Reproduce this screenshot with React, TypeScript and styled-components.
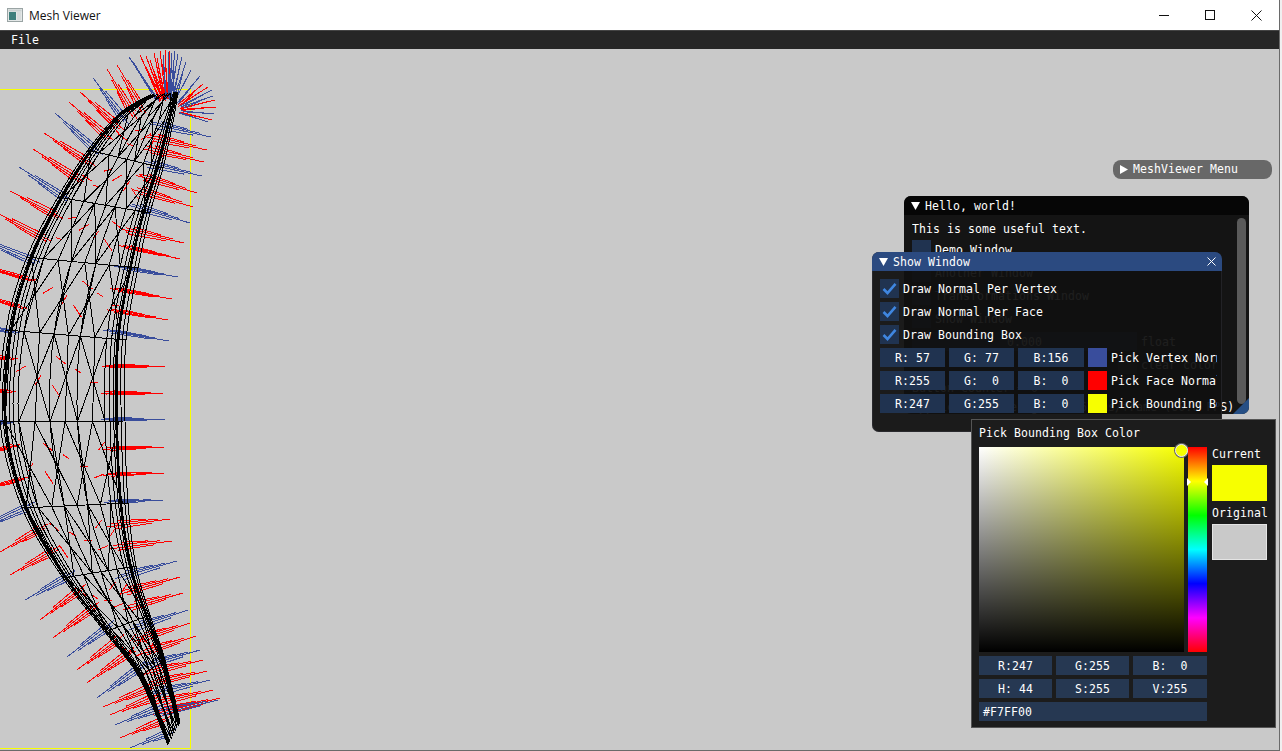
import styled, { createGlobalStyle } from 'styled-components';

type Pt = [number, number];

const GlobalStyle = createGlobalStyle`
  html, body {
    margin: 0;
    height: 100%;
    background: #f0f0f0;
    overflow: hidden;
  }
  #root {
    height: 100%;
  }
`;

const MONO = `'DejaVu Sans Mono', 'Liberation Mono', monospace`;

const Page = styled.div`
  position: relative;
  width: 1279px;
  height: 750px;
  display: flex;
  flex-direction: column;
  border-right: 1px solid #6a6a6a;
  border-bottom: 1px solid #6a6a6a;
`;

const TitleBar = styled.div`
  height: 30px;
  flex: none;
  display: flex;
  align-items: center;
  background: #fff;
  padding-left: 7px;
  font-family: 'Open Sans', 'Noto Sans', sans-serif;
  font-size: 12px;
  color: #111;
`;

const AppName = styled.span`
  margin-left: 6px;
  flex: 1;
`;

const CaptionButton = styled.div`
  width: 46px;
  height: 30px;
  display: flex;
  align-items: center;
  justify-content: center;
`;

const MenuBar = styled.div`
  height: 18px;
  flex: none;
  display: flex;
  align-items: center;
  padding-left: 11px;
  background: #262626;
  border-top: 1px solid #444;
  font-family: ${MONO};
  font-size: 11.5px;
  letter-spacing: 0.08px;
  color: #fff;
`;

const Viewport = styled.div`
  position: relative;
  flex: 1;
  background: #c9c9c9;
  overflow: hidden;
`;

const MeshCanvas = styled.svg`
  position: absolute;
  left: 0;
  top: 0;
`;

const SideMark = styled.div`
  position: absolute;
  left: 1280px;
  top: 670px;
  width: 2px;
  height: 27px;
  background: #2b4a80;
`;

/* imgui windows: free floating, canvas coordinates relative to the viewport (y - 49) */
const ImWindow = styled.div`
  position: absolute;
  font-family: ${MONO};
  font-size: 11.5px;
  letter-spacing: 0.08px;
  line-height: 21px;
  color: #fff;
  white-space: pre;
`;

const MenuCollapsed = styled(ImWindow)`
  left: 1113px;
  top: 111px;
  width: 159px;
  height: 19px;
  border-radius: 8px;
  background: #686868;
  display: flex;
  align-items: center;
  padding-left: 6px;
  box-sizing: border-box;
  gap: 4px;
`;

const HelloWindow = styled(ImWindow)`
  left: 904px;
  top: 147px;
  width: 345px;
  height: 218px;
  border-radius: 7px;
  background: #141414;
  overflow: hidden;
`;

const ShowWindow = styled(ImWindow)`
  left: 872px;
  top: 203px;
  width: 350px;
  height: 180px;
  border-radius: 7px;
  background: rgba(16, 16, 16, 0.94);
  box-shadow: 0 0 0 1px rgba(70, 70, 80, 0.35) inset;
  overflow: hidden;
`;

const WindowTitle = styled.div<{ $active?: boolean }>`
  height: 19px;
  display: flex;
  align-items: center;
  gap: 4px;
  padding: 0 6px;
  background: ${({ $active }) => ($active ? '#2b4a80' : '#060606')};
`;

const TitleText = styled.span`
  flex: 1;
  padding-top: 2px;
`;

const RowLabel = styled.span`
  padding-top: 2px;
`;

const HelloBody = styled.div`
  padding: 8px 8px 0;
  display: flex;
  flex-direction: column;
  gap: 4px;
`;

const HelloText = styled.div`
  height: 13px;
  line-height: 13px;
  width: 322px;
  overflow: hidden;
`;

const HelloRow = styled.div<{ $indent?: number }>`
  height: 19px;
  display: flex;
  align-items: center;
  gap: 4px;
  padding-left: ${({ $indent }) => $indent ?? 0}px;
  width: 322px;
  box-sizing: border-box;
  overflow: hidden;
`;

const Scrollbar = styled.div`
  position: absolute;
  right: 3px;
  top: 22px;
  width: 9px;
  height: 186px;
  border-radius: 5px;
  background: #5a5a5a;
`;

const ResizeGrip = styled.div`
  position: absolute;
  right: 0;
  bottom: 0;
  width: 0;
  height: 0;
  border-left: 16px solid transparent;
  border-bottom: 16px solid #264f85;
`;

const ShowBody = styled.div`
  padding: 8px 8px 0;
  display: flex;
  flex-direction: column;
  gap: 4px;
`;

const CheckRow = styled.div`
  height: 19px;
  display: flex;
  align-items: center;
  gap: 4px;
`;

const CheckBox = styled.div`
  width: 19px;
  height: 19px;
  flex: none;
  background: #203350;
  display: flex;
  align-items: center;
  justify-content: center;
`;

const ColorRow = styled.div`
  height: 19px;
  width: 337px;
  display: flex;
  align-items: center;
  gap: 4px;
  overflow: hidden;
`;

const NumberField = styled.div<{ $width: number }>`
  width: ${({ $width }) => $width}px;
  height: 19px;
  flex: none;
  background: #203350;
  text-align: center;
`;

const Swatch = styled.div<{ $color: string }>`
  width: 19px;
  height: 19px;
  flex: none;
  background: ${({ $color }) => $color};
`;

const PickerPopup = styled(ImWindow)`
  left: 971px;
  top: 370px;
  width: 305px;
  height: 309px;
  box-sizing: border-box;
  padding: 4px 7px 0;
  background: #1c1c1c;
  border: 1px solid #555;
  display: flex;
  flex-direction: column;
  gap: 4px;
`;

const PickerHeading = styled.div`
  height: 19px;
  line-height: 19px;
`;

const PickerMain = styled.div`
  display: flex;
  gap: 4px;
`;

const SvSquare = styled.div`
  position: relative;
  width: 205px;
  height: 205px;
  background: linear-gradient(to top, #000, rgba(0, 0, 0, 0)), linear-gradient(to right, #fff, #f7ff00);
`;

const SvMarker = styled.div`
  position: absolute;
  left: 196px;
  top: -3px;
  width: 11px;
  height: 11px;
  border-radius: 50%;
  background: #f7ff00;
  border: 1px solid #eee;
  box-shadow: 0 0 0 1px #666;
`;

const HueBar = styled.div`
  position: relative;
  width: 19px;
  height: 205px;
  background: linear-gradient(to bottom, #f00, #ff0 16.67%, #0f0 33.33%, #0ff 50%, #00f 66.67%, #f0f 83.33%, #f00);
`;

const HueArrow = styled.div<{ $side: 'left' | 'right' }>`
  position: absolute;
  top: 31px;
  ${({ $side }) => $side}: -1px;
  width: 0;
  height: 0;
  border-top: 4px solid transparent;
  border-bottom: 4px solid transparent;
  ${({ $side }) => ($side === 'left' ? 'border-left' : 'border-right')}: 4px solid #fff;
`;

const PreviewColumn = styled.div`
  margin-left: 1px;
  display: flex;
  flex-direction: column;
`;

const PreviewLabel = styled.div`
  height: 18px;
  line-height: 15px;
`;

const PreviewSwatch = styled.div<{ $color: string; $framed?: boolean }>`
  width: 55px;
  height: 36px;
  margin-bottom: 5px;
  box-sizing: border-box;
  background: ${({ $color }) => $color};
  border: ${({ $framed }) => ($framed ? '1px solid #e4e4e4' : 'none')};
`;

const FieldRow = styled.div`
  display: flex;
  gap: 4px;
  width: 228px;
`;

const HexField = styled.div`
  width: 228px;
  height: 19px;
  box-sizing: border-box;
  padding-left: 4px;
  background: #263852;
`;

const PickerField = styled(NumberField)`
  background: #263852;
`;

const TriangleDown = () => (
  <svg width="11" height="10" viewBox="0 0 11 10">
    <path d="M1 1 H10 L5.5 9 Z" fill="#fff" />
  </svg>
);

const TriangleRight = () => (
  <svg width="10" height="11" viewBox="0 0 10 11">
    <path d="M1 1 L9 5.5 L1 10 Z" fill="#fff" />
  </svg>
);

const CheckMark = () => (
  <svg width="15" height="13" viewBox="0 0 15 13">
    <path d="M1.5 7 L5.5 11 L13.5 1.8" fill="none" stroke="#3f86e0" strokeWidth="2.6" />
  </svg>
);

const CloseMark = () => (
  <svg width="9" height="9" viewBox="0 0 9 9">
    <path d="M0.5 0.5 L8.5 8.5 M8.5 0.5 L0.5 8.5" stroke="#fff" strokeWidth="1" />
  </svg>
);

const AppIcon = () => (
  <svg width="16" height="14" viewBox="0 0 16 14">
    <rect x="0.5" y="0.5" width="15" height="13" fill="#e4e8e8" stroke="#9aa4a4" />
    <rect x="1.5" y="1.5" width="13" height="2" fill="#c8d0d0" />
    <rect x="2" y="4" width="7" height="8" fill="#3e7f7c" />
    <rect x="10" y="4" width="4" height="8" fill="#d7dcdc" />
  </svg>
);

/* mesh data, coordinates are page pixels, shifted up by OFFSET_Y when drawn */
const OFFSET_Y = 49;
const ribs: [Pt, Pt][] = [
  [[150, 95], [178, 92]],
  [[120, 113], [173, 122]],
  [[88, 150], [163, 168]],
  [[58, 197], [150, 213]],
  [[27, 257], [138, 268]],
  [[6, 330], [126, 340]],
  [[0, 422], [125, 421]],
  [[22, 508], [128, 503]],
  [[63, 578], [136, 566]],
  [[105, 632], [150, 615]],
  [[139, 677], [165, 660]],
  [[168, 745], [180, 722]],
];
const fractions = [0, 0.025, 0.05, 0.08, 0.11, 0.15, 0.4, 0.62, 0.84, 0.88, 0.91, 0.94, 0.97, 1];
// the two strands that read as heavy outlines in the wireframe
const heavyFractions = [0.04, 0.93];
// cells of the fraction table that get crossed diagonals
const crossed: [number, number][] = [
  [0.04, 0.28],
  [0.15, 0.4],
  [0.28, 0.52],
  [0.4, 0.62],
  [0.52, 0.74],
  [0.62, 0.84],
  [0.74, 0.95],
];

const rightTips: [number, number, number][] = [
  [211, 137, 1], [207, 150, 0], [204, 162, 0], [202, 176, 1], [197, 193, 0], [193, 207, 0], [190, 223, 1], [184, 243, 0],
  [180, 259, 0], [178, 277, 1], [172, 299, 0], [168, 320, 0], [169, 341, 1], [165, 367, 0], [163, 394, 0], [165, 420, 1],
  [164, 447, 0], [164, 473, 0], [163, 500, 1], [170, 519, 0], [172, 541, 0], [177, 561, 1], [180, 577, 0], [183, 593, 0],
  [188, 610, 1], [190, 623, 0], [196, 636, 0], [200, 650, 1], [203, 660, 0], [207, 671, 0], [210, 680, 1], [213, 690, 0],
  [218, 700, 1], [220, 698, 0],
];

const leftTips: [number, number, number][] = [
  [93, 78, 1], [107, 69, 0], [117, 65, 0], [80, 92, 0], [69, 102, 0], [55, 113, 1], [44, 133, 0],
  [33, 149, 0], [19, 167, 1], [10, 191, 0], [-5, 212, 0], [-20, 238, 1], [-30, 262, 0], [-30, 292, 0], [-35, 322, 1],
  [-35, 355, 0], [-35, 388, 0], [-35, 421, 1], [-35, 458, 0], [-30, 492, 0], [-25, 530, 1], [0, 552, 0], [10, 575, 0],
  [25, 600, 1], [40, 620, 0], [53, 638, 0], [67, 657, 1], [77, 670, 0], [87, 683, 0], [97, 698, 1], [103, 707, 0],
  [110, 715, 0], [115, 725, 1], [120, 738, 0], [130, 748, 1],
];

const fanTips: [number, number, number][] = [
  [129, 57, 1], [133, 62, 1], [140, 55, 0], [143, 62, 0], [146, 56, 0], [150, 60, 0], [154, 53, 0], [157, 58, 0],
  [160, 51, 0], [163, 55, 1], [165, 50, 0], [168, 52, 1], [170, 51, 0], [172, 53, 1], [175, 51, 1], [178, 54, 1],
  [182, 57, 1], [186, 62, 1], [191, 70, 1], [200, 76, 1], [203, 84, 0], [208, 87, 0], [212, 90, 1], [213, 96, 1],
  [215, 100, 0], [216, 107, 0], [214, 114, 1], [212, 120, 0], [208, 122, 1],
];

const toStr = (p: Pt) => `${p[0].toFixed(1)},${(p[1] - OFFSET_Y).toFixed(1)}`;
const mix = (a: Pt, b: Pt, t: number): Pt => [a[0] + (b[0] - a[0]) * t, a[1] + (b[1] - a[1]) * t];

// catmull-rom through the rib points, so the long strands stay smooth
function spline(p0: Pt, p1: Pt, p2: Pt, p3: Pt, t: number): Pt {
  const f = (a: number, b: number, c: number, d: number) =>
    0.5 * (2 * b + (c - a) * t + (2 * a - 5 * b + 4 * c - d) * t * t + (3 * b - a - 3 * c + d) * t * t * t);
  return [f(p0[0], p1[0], p2[0], p3[0]), f(p0[1], p1[1], p2[1], p3[1])];
}

function nearest(poly: Pt[], p: Pt): Pt {
  let best: Pt = poly[0];
  let bestD = Infinity;
  for (let i = 0; i < poly.length - 1; i++) {
    const [a, b] = [poly[i], poly[i + 1]];
    const dx = b[0] - a[0];
    const dy = b[1] - a[1];
    const t = Math.max(0, Math.min(1, ((p[0] - a[0]) * dx + (p[1] - a[1]) * dy) / (dx * dx + dy * dy)));
    const q = mix(a, b, t);
    const d = (q[0] - p[0]) ** 2 + (q[1] - p[1]) ** 2;
    if (d < bestD) {
      bestD = d;
      best = q;
    }
  }
  return best;
}

function buildBundle(tips: [number, number, number][], contour: Pt[], inset: number) {
  const red: string[] = [];
  const blue: string[] = [];
  tips.forEach(([x, y, isBlue], index) => {
    const tip: Pt = [x, y];
    const base = nearest(contour, tip);
    const dx = base[0] - x;
    const dy = base[1] - y;
    const len = Math.hypot(dx, dy) || 1;
    const ux = dx / len;
    const uy = dy / len;
    const root: Pt = [base[0] + ux * inset, base[1] + uy * inset];
    const target = isBlue ? blue : red;
    const middle = y > 250 && y < 510;
    const spreadScale = middle ? 0.5 : 1;
    target.push(`M${toStr(tip)}L${toStr(root)}`);
    for (let k = 1; k <= 3; k++) {
      const side = k % 2 ? 1 : -1;
      const spread = (side * (k + 1) * 1.1 + ((index * 7) % 3) * 0.4) * spreadScale;
      const lead = 6 + k * 6;
      const start: Pt = [x + ux * lead - uy * spread * 0.6, y + uy * lead + ux * spread * 0.6];
      const end: Pt = [root[0] - ux * k * 4 - uy * spread, root[1] - uy * k * 4 + ux * spread];
      target.push(`M${toStr(start)}L${toStr(end)}`);
    }
  });
  return { red: red.join(''), blue: blue.join('') };
}

// the cap of the mesh: strands fan out from one small area instead of a contour
function buildFan(tips: [number, number, number][]) {
  const red: string[] = [];
  const blue: string[] = [];
  tips.forEach(([x, y, isBlue], index) => {
    const target = isBlue ? blue : red;
    const root: Pt = [168 + (x - 168) * 0.28, 100 + (y - 60) * 0.2];
    const jitter = (index % 3) - 1;
    target.push(`M${toStr([x, y])}L${toStr(root)}`);
    target.push(`M${toStr(mix([x, y], root, 0.2))}L${toStr([root[0] + jitter * 2 + 1, root[1] + 1])}`);
  });
  return { red: red.join(''), blue: blue.join('') };
}

function buildMesh() {
  let wire = '';
  let heavy = '';
  const point = (i: number, u: number) => mix(ribs[i][0], ribs[i][1], u);
  const last = ribs.length - 1;
  const strand = (u: number) => {
    const pts: string[] = [toStr(point(0, u))];
    for (let i = 0; i < last; i++) {
      const p0 = point(Math.max(i - 1, 0), u);
      const p1 = point(i, u);
      const p2 = point(i + 1, u);
      const p3 = point(Math.min(i + 2, last), u);
      for (let s = 1; s <= 5; s++) pts.push(toStr(spline(p0, p1, p2, p3, s / 5)));
    }
    return 'M' + pts.join('L');
  };
  fractions.forEach((u) => {
    wire += strand(u);
  });
  heavyFractions.forEach((u) => {
    heavy += strand(u);
  });
  ribs.forEach((_, i) => {
    if (i > 1 && i < last) wire += `M${toStr(point(i, 0))}L${toStr(point(i, 1))}`;
  });
  let ticks = '';
  for (let i = 0; i < last; i++) {
    crossed.forEach(([a, b], c) => {
      if ((i + c) % 2 === 0) {
        wire += `M${toStr(point(i, a))}L${toStr(point(i + 1, b))}M${toStr(point(i, b))}L${toStr(point(i + 1, a))}`;
      } else {
        wire += `M${toStr(point(i, a))}L${toStr(point(i + 1, a))}`;
      }
      if (i > 0 && i < last - 1) {
        const at = mix(point(i, a), point(i + 1, b), 0.3 + ((i * 5 + c) % 4) * 0.12);
        const dy = ((i * 37 + c * 11) % 13) - 6;
        const dx = ((i * 13 + c * 7) % 3) + 3;
        ticks += `M${toStr([at[0] - dx, at[1] - dy])}L${toStr([at[0] + dx, at[1] + dy])}`;
      }
    });
  }
  return { wire, heavy, ticks };
}

const mesh = buildMesh();
const leftContour = ribs.map((r) => r[0]);
const rightContour = ribs.map((r) => r[1]);
const rightBundle = buildBundle(rightTips, rightContour, 24);
const leftBundle = buildBundle(leftTips, leftContour, 14);
const fanBundle = buildFan(fanTips);

const MeshDrawing = () => (
  <MeshCanvas width="260" height="702" viewBox="0 0 260 702" shapeRendering="crispEdges" fill="none">
    <rect x="-5" y="40" width="195" height="1" fill="#f7ff00" />
    <rect x="190" y="40" width="1" height="660" fill="#f7ff00" />
    <rect x="-5" y="699" width="196" height="1" fill="#f7ff00" />
    <path d={rightBundle.red + leftBundle.red + fanBundle.red} stroke="#ff0000" />
    <path d={rightBundle.blue + leftBundle.blue + fanBundle.blue} stroke="#394d9c" />
    <path d={mesh.ticks} stroke="#ff0000" />
    <path d={mesh.wire} stroke="#000" />
    <path d={mesh.heavy} stroke="#000" strokeWidth="2" />
  </MeshCanvas>
);

const colorRows = [
  { r: 'R: 57', g: 'G: 77', b: 'B:156', color: '#394d9c', label: 'Pick Vertex Normal Color' },
  { r: 'R:255', g: 'G:  0', b: 'B:  0', color: '#ff0000', label: 'Pick Face Normal Color' },
  { r: 'R:247', g: 'G:255', b: 'B:  0', color: '#f7ff00', label: 'Pick Bounding Box Color' },
];

const App = () => (
  <Page>
    <GlobalStyle />
    <TitleBar>
      <AppIcon />
      <AppName>Mesh Viewer</AppName>
      <CaptionButton>
        <svg width="10" height="10" viewBox="0 0 10 10">
          <path d="M0 5.5 H10" stroke="#111" />
        </svg>
      </CaptionButton>
      <CaptionButton>
        <svg width="10" height="10" viewBox="0 0 10 10">
          <rect x="0.5" y="0.5" width="9" height="9" fill="none" stroke="#111" />
        </svg>
      </CaptionButton>
      <CaptionButton>
        <svg width="11" height="11" viewBox="0 0 11 11">
          <path d="M0.5 0.5 L10.5 10.5 M10.5 0.5 L0.5 10.5" stroke="#111" />
        </svg>
      </CaptionButton>
    </TitleBar>
    <MenuBar>File</MenuBar>
    <Viewport>
      <MeshDrawing />

      <MenuCollapsed>
        <TriangleRight />
        <span>MeshViewer Menu</span>
      </MenuCollapsed>

      <HelloWindow>
        <WindowTitle>
          <TriangleDown />
          <TitleText>Hello, world!</TitleText>
        </WindowTitle>
        <HelloBody>
          <HelloText>This is some useful text.</HelloText>
          <HelloRow>
            <CheckBox />
            <RowLabel>Demo Window</RowLabel>
          </HelloRow>
          <HelloRow>
            <CheckBox />
            <RowLabel>Another Window</RowLabel>
          </HelloRow>
          <HelloRow>
            <CheckBox />
            <RowLabel>Transformations Window</RowLabel>
          </HelloRow>
          <HelloRow>
            <CheckBox />
            <RowLabel>Show Window</RowLabel>
          </HelloRow>
          <HelloRow>
            <NumberField $width={225}>0.000</NumberField>
            <RowLabel>float</RowLabel>
          </HelloRow>
          <HelloRow $indent={206}>
            <Swatch $color="#3a3a3a" />
            <RowLabel>clear color</RowLabel>
          </HelloRow>
          <HelloRow>
            <RowLabel>Button counter = 0</RowLabel>
          </HelloRow>
          <HelloText>Application average 16.667 ms/frame (60.0 FPS)</HelloText>
        </HelloBody>
        <Scrollbar />
        <ResizeGrip />
      </HelloWindow>

      <ShowWindow>
        <WindowTitle $active>
          <TriangleDown />
          <TitleText>Show Window</TitleText>
          <CloseMark />
        </WindowTitle>
        <ShowBody>
          <CheckRow>
            <CheckBox>
              <CheckMark />
            </CheckBox>
            <RowLabel>Draw Normal Per Vertex</RowLabel>
          </CheckRow>
          <CheckRow>
            <CheckBox>
              <CheckMark />
            </CheckBox>
            <RowLabel>Draw Normal Per Face</RowLabel>
          </CheckRow>
          <CheckRow>
            <CheckBox>
              <CheckMark />
            </CheckBox>
            <RowLabel>Draw Bounding Box</RowLabel>
          </CheckRow>
          {colorRows.map((row) => (
            <ColorRow key={row.label}>
              <NumberField $width={65}>{row.r}</NumberField>
              <NumberField $width={65}>{row.g}</NumberField>
              <NumberField $width={66}>{row.b}</NumberField>
              <Swatch $color={row.color} />
              <RowLabel>{row.label}</RowLabel>
            </ColorRow>
          ))}
        </ShowBody>
      </ShowWindow>

      <PickerPopup>
        <PickerHeading>Pick Bounding Box Color</PickerHeading>
        <PickerMain>
          <SvSquare>
            <SvMarker />
          </SvSquare>
          <HueBar>
            <HueArrow $side="left" />
            <HueArrow $side="right" />
          </HueBar>
          <PreviewColumn>
            <PreviewLabel>Current</PreviewLabel>
            <PreviewSwatch $color="#f7ff00" />
            <PreviewLabel>Original</PreviewLabel>
            <PreviewSwatch $color="#c9c9c9" $framed />
          </PreviewColumn>
        </PickerMain>
        <FieldRow>
          <PickerField $width={73}>R:247</PickerField>
          <PickerField $width={73}>G:255</PickerField>
          <PickerField $width={74}>B:  0</PickerField>
        </FieldRow>
        <FieldRow>
          <PickerField $width={73}>H: 44</PickerField>
          <PickerField $width={73}>S:255</PickerField>
          <PickerField $width={74}>V:255</PickerField>
        </FieldRow>
        <HexField>#F7FF00</HexField>
      </PickerPopup>
      <SideMark />
    </Viewport>
  </Page>
);

export default App;
